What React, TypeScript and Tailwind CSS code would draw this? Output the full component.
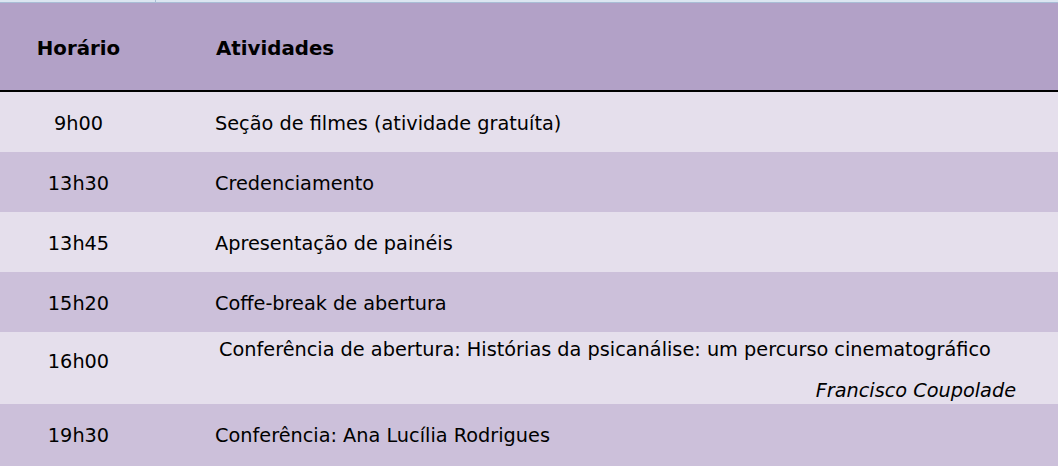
import React from "react";

type Row = { time: string; activity: string; speaker?: string };

const rows: Row[] = [
  { time: "9h00", activity: "Seção de filmes (atividade gratuíta)" },
  { time: "13h30", activity: "Credenciamento" },
  { time: "13h45", activity: "Apresentação de painéis" },
  { time: "15h20", activity: "Coffe-break de abertura" },
  {
    time: "16h00",
    activity: "Conferência de abertura: Histórias da psicanálise: um percurso cinematográfico",
    speaker: "Francisco Coupolade",
  },
  { time: "19h30", activity: "Conferência: Ana Lucília Rodrigues" },
];

export default function App() {
  return (
    <div className="h-[466px] w-[1058px] overflow-hidden bg-[#ccc0da] font-['DejaVu_Sans',sans-serif] text-[19.3px] text-black">
      {/* strip from the sheet above */}
      <div className="flex h-[3px] border-b border-[#a9bdd6] bg-[#dbe5f1]">
        <div className="w-[156px] border-r border-[#a9bdd6]" />
      </div>

      <div className="flex h-[89px] items-center border-b-2 border-black bg-[#b2a1c7] text-[19.8px] font-bold">
        <div className="w-[157px] pt-[4px] text-center">Horário</div>
        <div className="pl-[59px] pt-[4px]">Atividades</div>
      </div>

      {rows.map((r, i) =>
        r.speaker ? (
          <div key={r.time} className="flex h-[72px] bg-[#e5dfec]">
            <div className="flex w-[157px] items-center justify-center pb-[12px]">{r.time}</div>
            <div className="flex flex-1 flex-col pl-[62px] pr-[42px] pt-[4px]">
              <div>{r.activity}</div>
              <div className="mt-[12px] text-right italic">{r.speaker}</div>
            </div>
          </div>
        ) : (
          <div
            key={r.time}
            className={[
              "flex h-[60px] items-center pt-[5px]",
              i % 2 === 0 ? "bg-[#e5dfec]" : "bg-[#ccc0da]",
            ].join(" ")}
          >
            <div className="w-[157px] text-center">{r.time}</div>
            <div className="pl-[58px]">{r.activity}</div>
          </div>
        )
      )}
    </div>
  );
}
